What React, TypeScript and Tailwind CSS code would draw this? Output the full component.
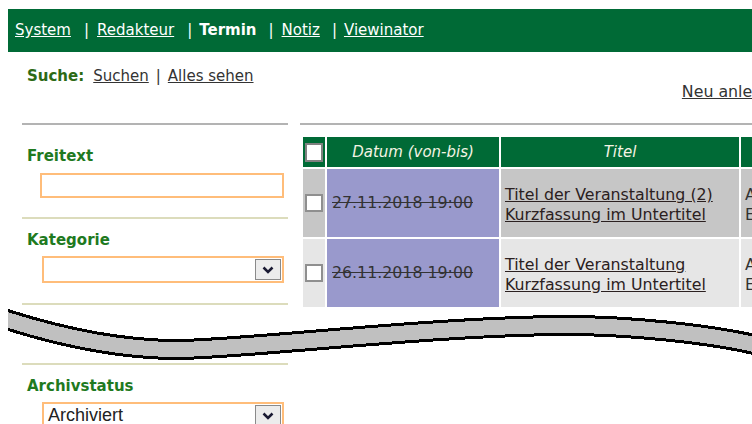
import React from "react";

function Chevron() {
  return (
    <svg width="12" height="8" viewBox="0 0 12 8" className="block">
      <path d="M1.5 1.5 L6 6 L10.5 1.5" fill="none" stroke="#1a1a33" strokeWidth="2.5" />
    </svg>
  );
}

function SelectBox({ value }: { value?: string }) {
  return (
    <div className="flex h-[27px] w-[242px] items-center justify-between border-2 border-[#ffbd7a] bg-white p-[1px]">
      <span className="pl-[3px] font-['Liberation_Sans',sans-serif] text-[18px] leading-[21px] text-[#222]">
        {value ?? ""}
      </span>
      <div className="flex h-[21px] w-[26px] items-center justify-center border border-[#8a8a8a] bg-[#ececec]">
        <Chevron />
      </div>
    </div>
  );
}

function Label({ children }: { children: React.ReactNode }) {
  return <div className="pl-[5px] font-bold text-[#1f7a1f]">{children}</div>;
}

function Wave() {
  const d = "M-10 7.8 L0 11 C60 30 120 40.5 170 40.5 C230 40.5 430 16.5 560 16.5 C620 16.5 700 25 744 35 L800 48";
  return (
    <div className="h-[54px]">
      <svg width="744" height="54" viewBox="0 0 744 54" className="block" shapeRendering="crispEdges">
        <path d={d} fill="none" stroke="#000" strokeWidth="21" strokeLinejoin="round" />
        <path d={d} fill="none" stroke="#c0c0c0" strokeWidth="15" strokeLinejoin="round" />
      </svg>
    </div>
  );
}

const rows = [
  {
    date: "27.11.2018 19:00",
    title: "Titel der Veranstaltung (2)",
    sub: "Kurzfassung im Untertitel",
    c1: "Aktuelles",
    c2: "Eintrag",
    bg: "bg-[#c6c6c6]",
  },
  {
    date: "26.11.2018 19:00",
    title: "Titel der Veranstaltung",
    sub: "Kurzfassung im Untertitel",
    c1: "Aktuelles",
    c2: "Eintrag",
    bg: "bg-[#e6e6e6]",
  },
];

export default function App() {
  return (
    <div className="h-[424px] w-[752px] overflow-hidden bg-white font-['DejaVu_Sans',sans-serif] text-[15px] leading-[18px] text-[#333]">
      <div className="w-[1100px] pl-[8px] pt-[9px]">
        {/* main navigation */}
        <nav className="flex h-[43px] bg-[#006a36] pl-[7px] pt-[12px] text-white">
          <a href="#" className="underline">System</a>
          <span className="ml-[13px]">|</span>
          <a href="#" className="ml-[8px] underline">Redakteur</a>
          <span className="ml-[13px]">|</span>
          <span className="ml-[7px] font-bold">Termin</span>
          <span className="ml-[12px]">|</span>
          <a href="#" className="ml-[8px] underline">Notiz</a>
          <span className="ml-[12px]">|</span>
          <a href="#" className="ml-[7px] underline">Viewinator</a>
        </nav>

        {/* search links */}
        <div className="mt-[17px] flex pl-[19px] leading-[15px]">
          <span className="font-bold text-[#2d6a15]">Suche:</span>
          <a href="#" className="ml-[9px] underline">Suchen</a>
          <span className="ml-[7px]">|</span>
          <a href="#" className="ml-[7px] underline">Alles sehen</a>
        </div>

        <div className="w-[774px] text-right text-[15.8px] leading-[15px]">
          <a href="#" className="underline">Neu anlegen</a>
        </div>

        <div className="mt-[24px] flex items-start">
          {/* filter column */}
          <div className="ml-[14px] w-[266px] border-t-2 border-[#b3b3b3] pt-[22px]">
            <Label>Freitext</Label>
            <input
              type="text"
              className="ml-[18px] mt-[8px] block h-[25px] w-[244px] border-2 border-[#ffbd7a] bg-white outline-none"
            />
            <div className="mt-[19px] h-[2px] bg-[#dcdcbc]" />
            <div className="mt-[12px]">
              <Label>Kategorie</Label>
            </div>
            <div className="ml-[20px] mt-[7px]">
              <SelectBox />
            </div>
            <div className="mt-[20px] h-[2px] bg-[#dcdcbc]" />
          </div>

          {/* event list */}
          <div className="ml-[12px] w-[780px] border-t-2 border-[#b3b3b3] pt-[10px]">
            <table className="ml-[1px] w-[602px] table-fixed border-separate border-spacing-[2px]">
              <thead>
                <tr className="h-[30px]">
                  <th className="w-[22px] bg-[#006a36] p-0 align-middle">
                    <div className="mx-auto h-[19px] w-[18px] border-2 border-[#808080] bg-white" />
                  </th>
                  <th className="w-[172px] bg-[#006a36] p-0 text-center font-normal italic text-[#f4f4e4]">
                    Datum (von-bis)
                  </th>
                  <th className="w-[238px] bg-[#006a36] p-0 text-center font-normal italic text-[#f4f4e4]">
                    Titel
                  </th>
                  <th className="w-[160px] bg-[#006a36] p-0 text-center font-normal italic text-[#f4f4e4]">
                    Kategorie
                  </th>
                </tr>
              </thead>
              <tbody className="text-[15.8px]">
                {rows.map((r) => (
                  <tr key={r.date} className="h-[68px]">
                    <td className={`${r.bg} p-0 align-middle`}>
                      <div className="mx-auto h-[18px] w-[18px] border-2 border-[#8f8f8f] bg-white" />
                    </td>
                    <td className="bg-[#9999cc] p-0 pl-[5px] align-middle">
                      <span className="line-through">{r.date}</span>
                    </td>
                    <td className={`${r.bg} p-0 pl-[4px] pt-[4px] align-middle leading-[20px]`}>
                      <a href="#" className="underline text-[#2b2020]">{r.title}</a>
                      <br />
                      <a href="#" className="underline text-[#2b2020]">{r.sub}</a>
                    </td>
                    <td className={`${r.bg} p-0 pl-[4px] pt-[4px] align-middle leading-[20px]`}>
                      {r.c1}
                      <br />
                      {r.c2}
                    </td>
                  </tr>
                ))}
              </tbody>
            </table>
          </div>
        </div>

        <Wave />

        <div className="ml-[14px] w-[266px]">
          <div className="h-[2px] bg-[#dcdcbc]" />
          <div className="mt-[12px]">
            <Label>Archivstatus</Label>
          </div>
          <div className="ml-[20px] mt-[7px]">
            <SelectBox value="Archiviert" />
          </div>
        </div>
      </div>
    </div>
  );
}
